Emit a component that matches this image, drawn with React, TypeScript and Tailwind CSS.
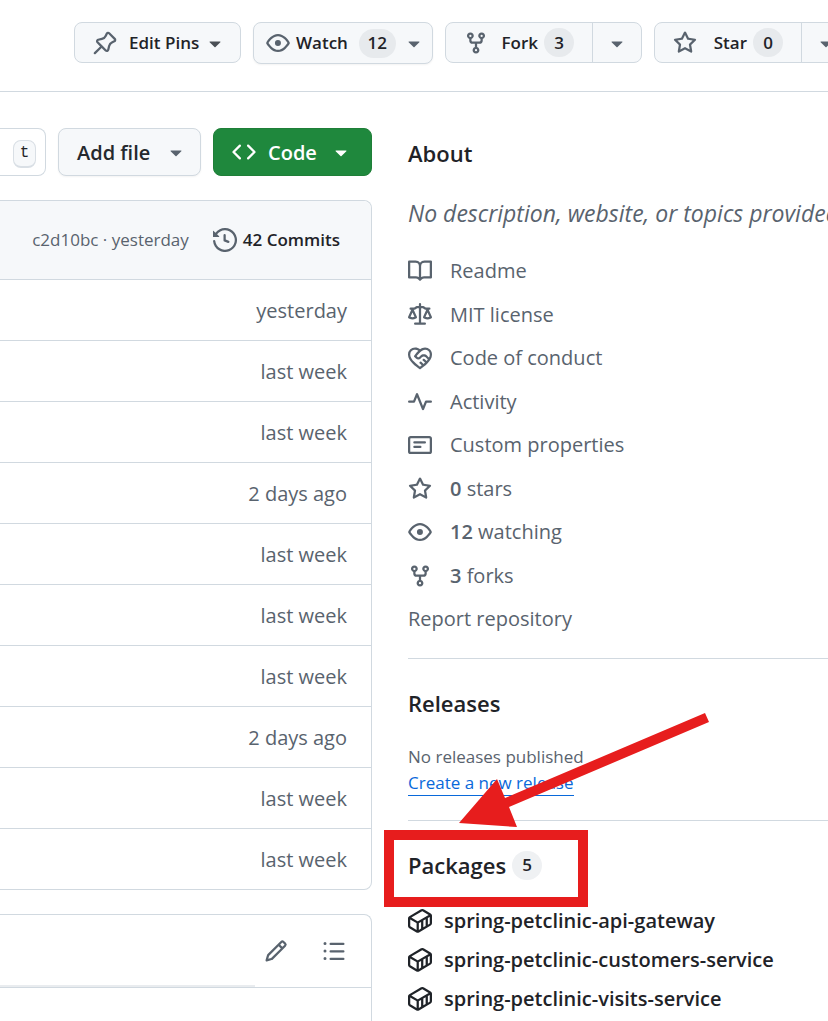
import type { ReactNode } from 'react';

const paths = {
  pin: 'm11.294.984 3.722 3.722a1.75 1.75 0 0 1-.504 2.826l-1.327.613a3.089 3.089 0 0 0-1.707 2.084l-.584 2.454c-.317 1.332-1.972 1.8-2.94.832L5.75 11.311 1.78 15.28a.749.749 0 1 1-1.06-1.06l3.969-3.97-2.204-2.204c-.968-.968-.5-2.623.832-2.94l2.454-.584a3.08 3.08 0 0 0 2.084-1.707l.613-1.327a1.75 1.75 0 0 1 2.826-.504ZM6.283 9.723l2.732 2.731a.25.25 0 0 0 .42-.119l.584-2.454a4.586 4.586 0 0 1 2.537-3.098l1.328-.613a.25.25 0 0 0 .072-.404l-3.722-3.722a.25.25 0 0 0-.404.072l-.613 1.328a4.584 4.584 0 0 1-3.098 2.537l-2.454.584a.25.25 0 0 0-.119.42l2.731 2.732Z',
  eye: 'M8 2c1.981 0 3.671.992 4.933 2.078 1.27 1.091 2.187 2.345 2.637 3.023a1.62 1.62 0 0 1 0 1.798c-.45.678-1.367 1.932-2.637 3.023C11.67 13.008 9.981 14 8 14c-1.981 0-3.671-.992-4.933-2.078C1.797 10.83.88 9.576.43 8.898a1.62 1.62 0 0 1 0-1.798c.45-.677 1.367-1.931 2.637-3.022C4.33 2.992 6.019 2 8 2ZM1.679 7.932a.12.12 0 0 0 0 .136c.411.622 1.241 1.75 2.366 2.717C5.176 11.758 6.527 12.5 8 12.5c1.473 0 2.825-.742 3.955-1.715 1.124-.967 1.954-2.096 2.366-2.717a.12.12 0 0 0 0-.136c-.412-.621-1.242-1.75-2.366-2.717C10.824 4.242 9.473 3.5 8 3.5c-1.473 0-2.825.742-3.955 1.715-1.124.967-1.954 2.096-2.366 2.717ZM8 10a2 2 0 1 1-.001-3.999A2 2 0 0 1 8 10Z',
  fork: 'M5 5.372v.878c0 .414.336.75.75.75h4.5a.75.75 0 0 0 .75-.75v-.878a2.25 2.25 0 1 1 1.5 0v.878a2.25 2.25 0 0 1-2.25 2.25h-1.5v2.128a2.251 2.251 0 1 1-1.5 0V8.5h-1.5A2.25 2.25 0 0 1 3.5 6.25v-.878a2.25 2.25 0 1 1 1.5 0ZM5 3.25a.75.75 0 1 0-1.5 0 .75.75 0 0 0 1.5 0Zm6.75.75a.75.75 0 1 0 0-1.5.75.75 0 0 0 0 1.5Zm-3 8.75a.75.75 0 1 0-1.5 0 .75.75 0 0 0 1.5 0Z',
  star: 'M8 .25a.75.75 0 0 1 .673.418l1.882 3.815 4.21.612a.75.75 0 0 1 .416 1.279l-3.046 2.97.719 4.192a.751.751 0 0 1-1.088.791L8 12.347l-3.766 1.98a.75.75 0 0 1-1.088-.79l.72-4.194L.818 6.374a.75.75 0 0 1 .416-1.28l4.21-.611L7.327.668A.75.75 0 0 1 8 .25Zm0 2.445L6.615 5.5a.75.75 0 0 1-.564.41l-3.097.45 2.24 2.184a.75.75 0 0 1 .216.664l-.528 3.084 2.769-1.456a.75.75 0 0 1 .698 0l2.77 1.456-.53-3.084a.75.75 0 0 1 .216-.664l2.24-2.183-3.096-.45a.75.75 0 0 1-.564-.41L8 2.694Z',
  caret: 'm4.427 7.427 3.396 3.396a.25.25 0 0 0 .354 0l3.396-3.396A.25.25 0 0 0 11.396 7H4.604a.25.25 0 0 0-.177.427Z',
  code: 'm11.28 3.22 4.25 4.25a.75.75 0 0 1 0 1.06l-4.25 4.25a.749.749 0 0 1-1.275-.326.749.749 0 0 1 .215-.734L13.94 8l-3.72-3.72a.749.749 0 0 1 .326-1.275.749.749 0 0 1 .734.215Zm-6.56 0a.751.751 0 0 1 1.042.018.751.751 0 0 1 .018 1.042L2.06 8l3.72 3.72a.749.749 0 0 1-.326 1.275.749.749 0 0 1-.734-.215L.47 8.53a.75.75 0 0 1 0-1.06Z',
  history: 'm.427 1.927 1.215 1.215a8.002 8.002 0 1 1-1.6 5.685.75.75 0 1 1 1.493-.154 6.5 6.5 0 1 0 1.18-4.458l1.358 1.358A.25.25 0 0 1 3.896 6H.25A.25.25 0 0 1 0 5.75V2.104a.25.25 0 0 1 .427-.177ZM7.75 4a.75.75 0 0 1 .75.75v2.992l2.028.812a.75.75 0 0 1-.557 1.392l-2.5-1A.751.751 0 0 1 7 8.25v-3.5A.75.75 0 0 1 7.75 4Z',
  book: 'M0 1.75A.75.75 0 0 1 .75 1h4.253c1.227 0 2.317.59 3 1.501A3.743 3.743 0 0 1 11.006 1h4.245a.75.75 0 0 1 .75.75v10.5a.75.75 0 0 1-.75.75h-4.507a2.25 2.25 0 0 0-1.591.659l-.622.621a.75.75 0 0 1-1.06 0l-.622-.621A2.25 2.25 0 0 0 5.258 13H.75a.75.75 0 0 1-.75-.75Zm7.251 10.324.004-5.073-.002-2.253A2.25 2.25 0 0 0 5.003 2.5H1.5v9h3.757a3.75 3.75 0 0 1 1.994.574ZM8.755 4.75l-.004 7.322a3.752 3.752 0 0 1 1.992-.572H14.5v-9h-3.495a2.25 2.25 0 0 0-2.25 2.25Z',
  law: 'M8.75.75V2h.985c.304 0 .603.08.867.231l1.29.736c.038.022.08.033.124.033h2.234a.75.75 0 0 1 0 1.5h-.427l2.111 4.692a.75.75 0 0 1-.154.838l-.53-.53.529.531-.001.002-.002.002-.006.006-.006.005-.01.01-.045.04c-.21.176-.441.327-.686.45C14.556 10.78 13.88 11 13 11a4.498 4.498 0 0 1-2.023-.454 3.544 3.544 0 0 1-.686-.45l-.045-.04-.016-.015-.006-.006-.004-.004v-.001a.75.75 0 0 1-.154-.838L12.178 4.5h-.162c-.305 0-.604-.079-.868-.231l-1.29-.736a.245.245 0 0 0-.124-.033H8.75V13h2.5a.75.75 0 0 1 0 1.5h-6.5a.75.75 0 0 1 0-1.5h2.5V3.5h-.984a.245.245 0 0 0-.124.033l-1.289.737c-.265.15-.564.23-.869.23h-.162l2.112 4.692a.75.75 0 0 1-.154.838l-.53-.53.529.531-.001.002-.002.002-.006.006-.016.015-.045.04c-.21.176-.441.327-.686.45C4.556 10.78 3.88 11 3 11a4.498 4.498 0 0 1-2.023-.454 3.544 3.544 0 0 1-.686-.45l-.045-.04-.016-.015-.006-.006-.004-.004v-.001a.75.75 0 0 1-.154-.838L2.178 4.5H1.75a.75.75 0 0 1 0-1.5h2.234a.249.249 0 0 0 .125-.033l1.288-.737c.265-.15.564-.23.869-.23h.984V.75a.75.75 0 0 1 1.5 0Zm2.945 8.477c.285.135.718.273 1.305.273s1.02-.138 1.305-.273L13 6.327Zm-10 0c.285.135.718.273 1.305.273s1.02-.138 1.305-.273L3 6.327Z',
  conduct: 'M8.048 2.241c.964-.709 2.079-1.238 3.325-1.241a4.616 4.616 0 0 1 3.282 1.355c.41.408.757.86.996 1.428.238.568.348 1.206.347 1.968 0 2.193-1.505 4.254-3.081 5.862-1.496 1.526-3.213 2.796-4.249 3.563l-.22.163a.749.749 0 0 1-.895 0l-.221-.163c-1.036-.767-2.753-2.037-4.249-3.563C1.51 10.008.007 7.952.002 5.762a4.614 4.614 0 0 1 1.353-3.407C3.123.585 6.223.537 8.048 2.24Zm-1.153.983c-1.25-1.033-3.321-.967-4.48.191a3.115 3.115 0 0 0-.913 2.335c0 1.556 1.109 3.24 2.652 4.813C5.463 11.898 6.96 13.032 8 13.805c.353-.262.758-.565 1.191-.905l-1.326-1.223a.75.75 0 0 1 1.018-1.102l1.48 1.366c.328-.281.659-.577.984-.887L9.99 9.802a.75.75 0 1 1 1.019-1.103l1.384 1.28c.295-.329.566-.661.81-.995L12.92 8.7l-1.167-1.168c-.674-.671-1.78-.664-2.474.03-.268.269-.538.537-.802.797-.893.882-2.319.843-3.185-.032-.346-.35-.693-.697-1.043-1.047a.75.75 0 0 1-.04-1.016c.162-.191.336-.401.52-.623.62-.748 1.356-1.637 2.166-2.417Zm7.112 4.442c.313-.65.491-1.293.491-1.916v-.001c0-.614-.088-1.045-.23-1.385-.143-.339-.357-.633-.673-.949a3.111 3.111 0 0 0-2.218-.915c-1.092.003-2.165.627-3.226 1.602-.823.755-1.554 1.637-2.228 2.45l-.127.154.562.566a.755.755 0 0 0 1.066.02l.794-.79c1.258-1.258 3.312-1.31 4.594-.032.396.394.792.791 1.173 1.173Z',
  pulse: 'M6 2c.306 0 .582.187.696.471L10 10.731l1.304-3.26A.751.751 0 0 1 12 7h3.25a.75.75 0 0 1 0 1.5h-2.742l-1.812 4.528a.751.751 0 0 1-1.392 0L6 4.77 4.696 8.03A.75.75 0 0 1 4 8.5H.75a.75.75 0 0 1 0-1.5h2.742l1.812-4.529A.751.751 0 0 1 6 2Z',
  note: 'M0 3.75C0 2.784.784 2 1.75 2h12.5c.966 0 1.75.784 1.75 1.75v8.5A1.75 1.75 0 0 1 14.25 14H1.75A1.75 1.75 0 0 1 0 12.25Zm1.75-.25a.25.25 0 0 0-.25.25v8.5c0 .138.112.25.25.25h12.5a.25.25 0 0 0 .25-.25v-8.5a.25.25 0 0 0-.25-.25ZM3.5 6.25a.75.75 0 0 1 .75-.75h7a.75.75 0 0 1 0 1.5h-7a.75.75 0 0 1-.75-.75Zm.75 2.25h4a.75.75 0 0 1 0 1.5h-4a.75.75 0 0 1 0-1.5Z',
  container: 'm10.41.24 4.711 2.774c.544.316.878.897.879 1.526v5.01a1.77 1.77 0 0 1-.88 1.53l-7.753 4.521-.002.001a1.769 1.769 0 0 1-1.774 0H5.59L.873 12.85A1.762 1.762 0 0 1 0 11.327V6.292c0-.304.078-.598.22-.855l.004-.005.01-.019c.15-.262.369-.486.64-.643L8.641.239a1.752 1.752 0 0 1 1.765 0l.002.001ZM9.397 1.534l-7.17 4.182 4.116 2.388a.27.27 0 0 0 .269 0l7.152-4.148-4.115-2.422a.252.252 0 0 0-.252 0Zm-7.768 10.02 4.1 2.393V9.474a1.807 1.807 0 0 1-.138-.072L1.5 7.029v4.298c0 .095.05.181.129.227Zm8.6.642 1.521-.887v-4.45l-1.521.882ZM7.365 9.402h.001c-.044.026-.09.049-.136.071v4.472l1.5-.875V8.61Zm5.885 1.032 1.115-.65h.002a.267.267 0 0 0 .133-.232V5.264l-1.25.725Z',
  pencil: 'M11.013 1.427a1.75 1.75 0 0 1 2.474 0l1.086 1.086a1.75 1.75 0 0 1 0 2.474l-8.61 8.61c-.21.21-.47.364-.756.445l-3.251.93a.75.75 0 0 1-.927-.928l.929-3.25c.081-.286.235-.547.445-.758l8.61-8.61Zm.176 4.823L9.75 4.81l-6.286 6.287a.253.253 0 0 0-.064.108l-.558 1.953 1.953-.558a.253.253 0 0 0 .108-.064Zm1.238-3.763a.25.25 0 0 0-.354 0L10.811 3.75l1.439 1.44 1.263-1.263a.25.25 0 0 0 0-.354Z',
  list: 'M5.75 2.5h8.5a.75.75 0 0 1 0 1.5h-8.5a.75.75 0 0 1 0-1.5Zm0 5h8.5a.75.75 0 0 1 0 1.5h-8.5a.75.75 0 0 1 0-1.5Zm0 5h8.5a.75.75 0 0 1 0 1.5h-8.5a.75.75 0 0 1 0-1.5ZM2 14a1 1 0 1 1 0-2 1 1 0 0 1 0 2Zm1-6a1 1 0 1 1-2 0 1 1 0 0 1 2 0ZM2 4a1 1 0 1 1 0-2 1 1 0 0 1 0 2Z',
};

type IconName = keyof typeof paths;

function Icon({ name, className = '' }: { name: IconName; className?: string }) {
  return (
    <svg viewBox="0 0 16 16" aria-hidden="true" className={`size-6 shrink-0 fill-current ${className}`}>
      <path d={paths[name]} />
    </svg>
  );
}

function Count({ children, className = 'bg-[#e7eaed]' }: { children: ReactNode; className?: string }) {
  return (
    <span className={`flex h-[29px] min-w-[30px] items-center justify-center rounded-full px-[9px] text-[17px] font-semibold text-[#1f2328] ${className}`}>
      {children}
    </span>
  );
}

const actionButton = 'flex shrink-0 items-center rounded-lg border border-[#d1d9e0] bg-[#f6f8fa] text-[17px] font-semibold';

function SplitButton({ icon, label, count, menuLabel }: { icon: IconName; label: string; count: number; menuLabel: string }) {
  return (
    <div className={`${actionButton} h-[41px]`}>
      <button type="button" className="flex h-full w-[146px] items-center pl-[18px]">
        <Icon name={icon} className="text-[#59636e]" />
        <span className="flex grow items-center justify-end gap-[6px] pr-[18px]">
          {label}
          <Count>{count}</Count>
        </span>
      </button>
      <button type="button" aria-label={menuLabel} className="flex h-full w-[49px] items-center justify-center border-l border-[#d1d9e0] text-[#59636e]">
        <Icon name="caret" />
      </button>
    </div>
  );
}

const updates = ['yesterday', 'last week', 'last week', '2 days ago', 'last week', 'last week', 'last week', '2 days ago', 'last week', 'last week'];

const facts: { icon: IconName; value?: string; label: string }[] = [
  { icon: 'book', label: 'Readme' },
  { icon: 'law', label: 'MIT license' },
  { icon: 'conduct', label: 'Code of conduct' },
  { icon: 'pulse', label: 'Activity' },
  { icon: 'note', label: 'Custom properties' },
  { icon: 'star', value: '0', label: 'stars' },
  { icon: 'eye', value: '12', label: 'watching' },
  { icon: 'fork', value: '3', label: 'forks' },
];

const packages = ['spring-petclinic-api-gateway', 'spring-petclinic-customers-service', 'spring-petclinic-visits-service'];

export default function App() {
  return (
    <div className="min-h-screen overflow-hidden bg-white font-['Open_Sans','Noto_Sans',sans-serif] text-[#1f2328]">
      <header className="flex items-start gap-3 border-b border-[#d1d9e0] pt-[22px] pb-[27px] pl-[74px]">
        <button type="button" className={`${actionButton} h-[41px] w-[167px] pl-[18px]`}>
          <Icon name="pin" className="text-[#59636e]" />
          <span className="ml-3">Edit Pins</span>
          <Icon name="caret" className="ml-1 text-[#4a4f55]" />
        </button>
        <button type="button" className={`${actionButton} h-[42px] w-[180px] pl-3 shadow-xs`}>
          <Icon name="eye" className="text-[#59636e]" />
          <span className="ml-[6px]">Watch</span>
          <span className="ml-auto flex items-center gap-[6px] pr-[6px]">
            <Count>12</Count>
            <Icon name="caret" className="text-[#59636e]" />
          </span>
        </button>
        <SplitButton icon="fork" label="Fork" count={3} menuLabel="Choose a fork" />
        <SplitButton icon="star" label="Star" count={0} menuLabel="Add to a list" />
      </header>

      <div className="grid grid-cols-[minmax(0,1fr)_420px] gap-x-9 pt-9">
        <main>
          <div className="flex h-12 justify-end gap-3">
            <label className="flex min-w-0 grow items-center rounded-r-lg border border-l-0 border-[#d1d9e0] pt-[3px] pr-[9px]">
              <input type="text" aria-label="Go to file" className="w-0 min-w-0 grow outline-none" />
              <kbd className="flex h-7 w-[23px] shrink-0 items-center justify-center rounded-lg border border-b-2 border-[#d9dfe5] bg-[#f6f8fa] font-['Liberation_Mono',monospace] text-base">
                t
              </kbd>
            </label>
            <button type="button" className="flex w-[143px] shrink-0 items-center rounded-lg border border-[#d1d9e0] bg-[#f6f8fa] pl-[18px] text-xl font-semibold text-[#25292e] shadow-xs">
              <span className="pt-0.5">Add file</span>
              <Icon name="caret" className="mr-3 ml-auto text-[#59636e]" />
            </button>
            <button type="button" className="flex w-[159px] shrink-0 items-center rounded-lg border border-[#1f7f38] bg-[#1f883d] pl-[18px] text-xl font-semibold text-white">
              <Icon name="code" />
              <span className="ml-3 pt-0.5">Code</span>
              <Icon name="caret" className="mr-[18px] ml-auto" />
            </button>
          </div>

          <section className="mt-6 rounded-r-lg border border-l-0 border-[#d1d9e0]">
            <div className="flex h-[79px] items-center justify-end rounded-tr-lg border-b border-[#d1d9e0] bg-[#f6f8fa] pr-[31px] text-[17px]">
              <a href="#commit" className="text-[#59636e]">c2d10bc · yesterday</a>
              <a href="#commits" className="ml-6 flex items-center gap-[6px] font-semibold">
                <Icon name="history" className="text-[#59636e]" />
                42 Commits
              </a>
            </div>
            <ul className="divide-y divide-[#d1d9e0]">
              {updates.map((when, i) => (
                <li key={i} className="flex h-[61px] items-center justify-end pt-0.5 pr-6 text-xl text-[#59636e] last:h-[60px]">
                  {when}
                </li>
              ))}
            </ul>
          </section>

          <section className="mt-6 rounded-tr-lg border border-b-0 border-l-0 border-[#d1d9e0]">
            <div className="flex h-[73px] items-center gap-[9px] border-b border-[#d1d9e0] pr-[25px] text-[#59636e]">
              <div className="min-w-0 grow self-end border-b-2 border-[#e9ecef]" />
              <div className="flex items-center gap-[34px]">
                <button type="button" aria-label="Edit file"><Icon name="pencil" /></button>
                <button type="button" aria-label="Outline"><Icon name="list" /></button>
              </div>
            </div>
            <div className="h-[33px]" />
          </section>
        </main>

        <aside className="relative">
          <h2 className="pt-[9px] text-[22px] leading-8 font-semibold">About</h2>
          <p className="mt-7 text-[23px] leading-8 whitespace-nowrap text-[#59636e] italic">No description, website, or topics provided.</p>
          <ul className="mt-[26px] flex h-[380px] flex-col justify-between text-xl leading-8 text-[#59636e]">
            {facts.map((fact) => (
              <li key={fact.label}>
                <a href="#about" className="flex items-center gap-[18px]">
                  <Icon name={fact.icon} />
                  <span>
                    {fact.value && <strong className="font-semibold">{fact.value} </strong>}
                    {fact.label}
                  </span>
                </a>
              </li>
            ))}
            <li><a href="#report">Report repository</a></li>
          </ul>

          <section className="mt-[23px] border-t border-[#d1d9e0] pt-7">
            <h2 className="text-[22px] leading-8 font-semibold">Releases</h2>
            <p className="mt-6 text-[17px] leading-7 text-[#59636e]">No releases published</p>
            <a href="#new-release" className="inline-block border-b border-[#0969da] text-[17px] leading-6 text-[#0969da]">
              Create a new release
            </a>
          </section>

          <section className="mt-6 border-t border-[#d1d9e0] pt-7">
            <h2 className="relative flex h-8 items-center gap-[6px] text-[22px] leading-8 font-semibold">
              Packages
              <Count className="bg-[#eff1f3]">5</Count>
              <span className="pointer-events-none absolute -top-[19px] -left-6 h-[77px] w-[204px] border-10 border-[#e71d1d]" />
            </h2>
            <ul className="mt-5">
              {packages.map((name) => (
                <li key={name}>
                  <a href="#package" className="flex h-[39px] items-center gap-3 text-xl font-semibold">
                    <Icon name="container" />
                    {name}
                  </a>
                </li>
              ))}
            </ul>
          </section>

          <svg viewBox="0 0 250 114" aria-hidden="true" className="pointer-events-none absolute top-[585px] left-[51px] h-[114px] w-[250px] fill-[#e71d1d]">
            <path d="M0 110 38 66l8 19L246 0l4 9L50 94l8 20Z" />
          </svg>
        </aside>
      </div>
    </div>
  );
}
